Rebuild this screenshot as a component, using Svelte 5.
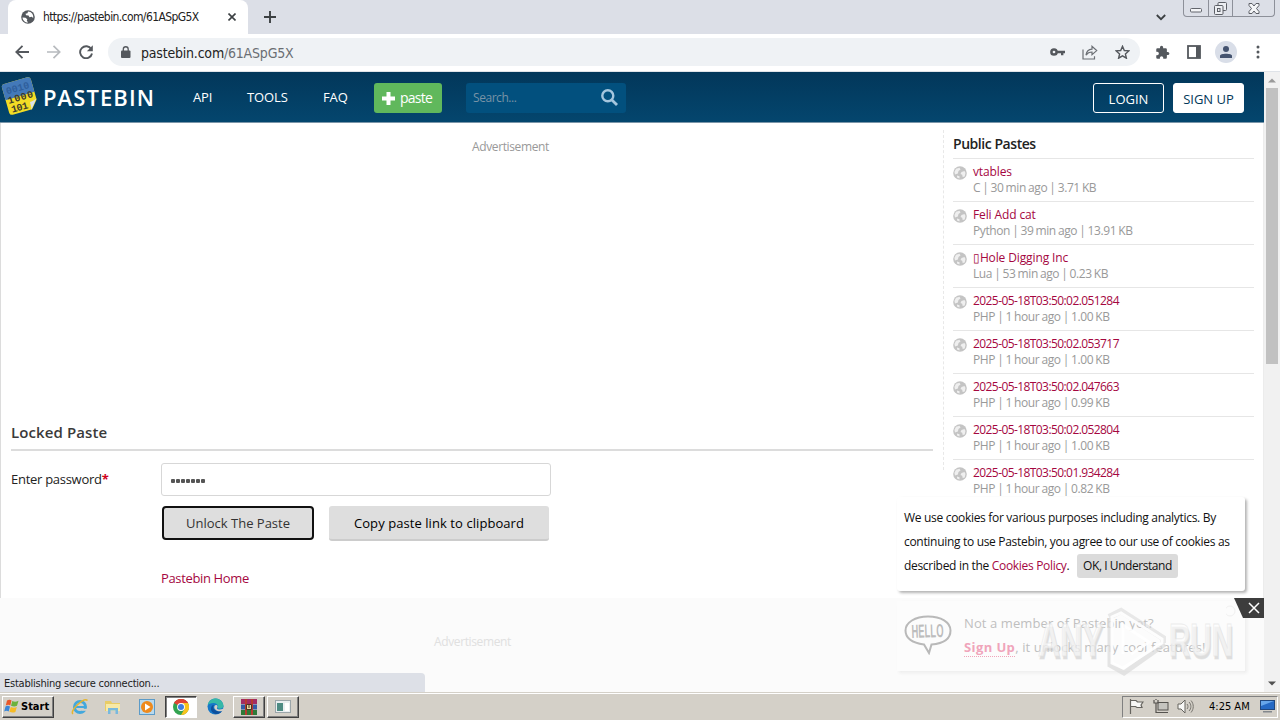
<script lang="ts">
  const pastes = [
    { title: 'vtables', meta: 'C | 30 min ago | 3.71 KB' },
    { title: 'Feli Add cat', meta: 'Python | 39 min ago | 13.91 KB' },
    { title: '▯Hole Digging Inc', meta: 'Lua | 53 min ago | 0.23 KB' },
    { title: '2025-05-18T03:50:02.051284', meta: 'PHP | 1 hour ago | 1.00 KB', stamp: true },
    { title: '2025-05-18T03:50:02.053717', meta: 'PHP | 1 hour ago | 1.00 KB', stamp: true },
    { title: '2025-05-18T03:50:02.047663', meta: 'PHP | 1 hour ago | 0.99 KB', stamp: true },
    { title: '2025-05-18T03:50:02.052804', meta: 'PHP | 1 hour ago | 1.00 KB', stamp: true },
    { title: '2025-05-18T03:50:01.934284', meta: 'PHP | 1 hour ago | 0.82 KB', stamp: true },
  ];

  let password = $state('secret1');
</script>

<div class="screen">
  <div class="tabstrip">
    <div class="tab">
      <svg class="favicon" width="14" height="14" viewBox="0 0 14 14">
        <circle cx="7" cy="7" r="6.800" fill="#54585d" />
        <path d="M1.500 7.500l3 .2 1.800 1.600-.5 1.500 1.400 1.700c-3 .2-5.500-2-5.700-5zM7 1.500l-.5 1.700-2 .6.600 1.500 2.400.2 1 1.700 2.200-.4 1.500 1.200C12.800 4.500 10.500 1.600 7 1.500z" fill="#fff" />
      </svg>
      <span class="tab-title">https://pastebin.com/61ASpG5X</span>
      <svg class="tab-close" width="8" height="8" viewBox="0 0 8 8"><path d="M.5.5l7 7M7.500.5l-7 7" stroke="#3c4043" stroke-width="1.600" /></svg>
    </div>
    <svg class="plus" width="12" height="12" viewBox="0 0 12 12"><path d="M6 0v12M0 6h12" stroke="#3c4043" stroke-width="1.900" /></svg>
    <svg class="chevron" width="10" height="7" viewBox="0 0 10 7"><path d="M.8 1l4.200 4.200L9.200 1" fill="none" stroke="#3c4043" stroke-width="1.800" /></svg>
    <div class="window-buttons">
      <span><svg width="12" height="5" viewBox="0 0 12 5"><rect x=".5" y=".5" width="11" height="3.500" rx="1" fill="#f4f5f7" stroke="#62656c" /></svg></span>
      <span><svg width="13" height="13" viewBox="0 0 13 13" fill="#eceef2" stroke="#5c5f66"><rect x="4" y=".5" width="8.500" height="8" rx="1" /><rect x=".5" y="3.500" width="8.500" height="9" rx="1" /><rect x="3.500" y="6.500" width="2.500" height="3" /></svg></span>
      <span class="wide"><svg width="12" height="11" viewBox="0 0 12 11"><path d="M1 .5h3l2 2.500 2-2.500h3v2L8.500 5.500 11 8.500v2H8L6 8l-2 2.500H1v-2l2.500-3L1 2.500z" fill="#f4f5f7" stroke="#5c5f66" /></svg></span>
    </div>
  </div>

  <div class="toolbar">
    <svg class="back" width="14" height="14" viewBox="0 0 14 14"><path d="M14 7H1.500M7.500.8L1.300 7l6.200 6.200" fill="none" stroke="#54585d" stroke-width="1.800" /></svg>
    <svg class="forward" width="14" height="14" viewBox="0 0 14 14"><path d="M0 7h12.500M6.500.8L12.700 7l-6.200 6.200" fill="none" stroke="#b7babe" stroke-width="1.700" /></svg>
    <svg class="reload" width="14" height="14" viewBox="0 0 14 14"><path d="M12.300 4.200A6 6 0 1 0 13 8.500" fill="none" stroke="#54585d" stroke-width="1.900" /><path d="M13.800.3v5.900H7.900z" fill="#54585d" /></svg>
    <div class="omnibox">
      <svg width="10" height="12" viewBox="0 0 10 12"><rect y="4.500" width="9.500" height="7.500" rx="1" fill="#54585d" /><path d="M2.300 5V3.200a2.450 2.450 0 0 1 4.900 0V5" fill="none" stroke="#54585d" stroke-width="1.300" /></svg>
      <span class="url">pastebin.com<em>/61ASpG5X</em></span>
      <svg class="key" width="15" height="8" viewBox="0 0 15 8"><circle cx="4" cy="4" r="2.600" fill="none" stroke="#54585d" stroke-width="2.500" /><path d="M6.500 4H15M12.200 4v3.200" stroke="#54585d" stroke-width="2.400" /></svg>
      <svg class="share" width="16" height="15" viewBox="0 0 16 15"><path d="M1 4.500V14h11.500v-2.800M4 10.200c.5-3.800 2.500-5.800 6-6V1.300l4.700 4.300L10 9.700V7C7.500 7 5.500 8 4 10.200z" fill="none" stroke="#6b6f74" stroke-width="1.200" /></svg>
      <svg class="star" width="15" height="14" viewBox="0 0 15 14"><path d="M7.500 1.300l1.800 4.200 4.500.4-3.400 3 1 4.300-3.900-2.300-3.900 2.300 1-4.300-3.400-3 4.500-.4z" fill="none" stroke="#54585d" stroke-width="1.400" /></svg>
    </div>
    <svg class="puzzle" width="15" height="15" viewBox="0 0 24 24"><path d="M20.500 11H19V7a2 2 0 0 0-2-2h-4V3.500a2.500 2.500 0 0 0-5 0V5H4a2 2 0 0 0-2 2v3.800h1.500a2.700 2.700 0 0 1 0 5.400H2V20a2 2 0 0 0 2 2h3.800v-1.500a2.700 2.700 0 0 1 5.400 0V22H17a2 2 0 0 0 2-2v-4h1.500a2.500 2.500 0 0 0 0-5z" fill="#54585d" /></svg>
    <svg class="panel" width="14" height="14" viewBox="0 0 14 14"><rect x="1" y="1" width="12" height="12" fill="#fff" stroke="#54585d" stroke-width="1.800" /><path d="M9 1h4v12H9z" fill="#54585d" /></svg>
    <span class="avatar"><svg width="12" height="12" viewBox="0 0 12 12" fill="#44536f"><circle cx="6" cy="3" r="3" /><path d="M0 12V9.800C0 7 12 7 12 9.800V12z" /></svg></span>
    <svg class="dots" width="4" height="14" viewBox="0 0 4 14" fill="#54585d"><circle cx="2" cy="2" r="1.500" /><circle cx="2" cy="7" r="1.500" /><circle cx="2" cy="12" r="1.500" /></svg>
  </div>

  <div class="viewport">
    <div class="page">
      <header>
        <svg class="logo" width="38" height="42" viewBox="0 0 38 42">
          <g transform="rotate(-16 19 21)">
            <path d="M7 5h24a3 3 0 0 1 3 3v21l-7 8H7a3 3 0 0 1-3-3V8a3 3 0 0 1 3-3z" fill="#f3dc25" />
            <path d="M7 5h24a3 3 0 0 1 3 3v13H4V8a3 3 0 0 1 3-3z" fill="#4379b9" />
            <text x="7" y="16" textLength="24" fill="#2f5f9c">0010</text>
            <text x="6" y="25.500" textLength="26" fill="#3d3b2c">1000</text>
            <text x="7" y="35" textLength="17" fill="#3d3b2c">101</text>
            <path d="M34 28l-8 9.500c1.500-3 .5-6 1-8 2 .2 4.500-.2 7-1.500z" fill="#dce3ea" />
          </g>
        </svg>
        <span class="brand">PASTEBIN</span>
        <nav>
          <a class="api" href="#api">API</a>
          <a class="tools" href="#tools">TOOLS</a>
          <a class="faq" href="#faq">FAQ</a>
        </nav>
        <button class="new-paste">
          <svg width="13" height="13" viewBox="0 0 13 13"><path d="M6.500 0v13M0 6.500h13" stroke="#fff" stroke-width="4" /></svg>
          <span>paste</span>
        </button>
        <div class="search">
          <span>Search...</span>
          <svg width="17" height="17" viewBox="0 0 17 17"><circle cx="6.800" cy="6.800" r="5.500" fill="none" stroke="#a5c6de" stroke-width="2.400" /><path d="M10.700 10.700l5.300 5.300" stroke="#a5c6de" stroke-width="2.800" /></svg>
        </div>
        <div class="auth">
          <button class="login">LOGIN</button>
          <button class="signup">SIGN UP</button>
        </div>
      </header>

      <div class="content">
        <main>
          <div class="ad"><span>Advertisement</span></div>
          <h1><span>Locked Paste</span></h1>
          <div class="field">
            <label for="password">Enter password<b>*</b></label>
            <div class="input" id="password">
              {#each password as _, i (i)}
                <i></i>
              {/each}
            </div>
          </div>
          <div class="actions">
            <button class="unlock">Unlock The Paste</button>
            <button class="copy">Copy paste link to clipboard</button>
          </div>
          <a class="home" href="#home">Pastebin Home</a>
        </main>

        <aside>
          <h2>Public Pastes</h2>
          <ul>
            {#each pastes as paste (paste.title)}
              <li>
                <svg width="14" height="14" viewBox="0 0 14 14">
                  <circle cx="7" cy="7" r="6.800" fill="#c4c4c4" />
                  <path d="M3 2.800l3.500-1 1 1.600-2 1.700-.6 2.500L2 8.500 1.400 6zM8.500 6l3-1 1 2-.8 3.500-2 .5-.5-2.200-1.700-.8zM4 9.500l2.500.8v2.200L4 11.500z" fill="#efefef" />
                </svg>
                <div>
                  <a class:stamp={paste.stamp} href="#paste">{paste.title}</a>
                  <p>{paste.meta}</p>
                </div>
              </li>
            {/each}
          </ul>
        </aside>
      </div>

      <div class="banner">
        <span>Advertisement</span>
      </div>

      <div class="hello">
        <svg width="48" height="40" viewBox="0 0 48 40">
          <path d="M24 1.500C11 1.500 1.500 7.500 1.500 15.500S9 28 20 29.500L25 38l2.500-8.500C39 28.500 46.500 24 46.500 15.500S37 1.500 24 1.500z" fill="#fcfcfc" stroke="#b9b9b9" stroke-width="2" />
          <text x="7.500" y="22.500" textLength="32" lengthAdjust="spacingAndGlyphs" transform="rotate(-2 24 16)">HELLO</text>
        </svg>
        <p><span class="ask">Not a member of Pastebin yet?</span><br /><a href="#signup">Sign Up</a><span class="cool">, it unlocks many cool features!</span></p>
      </div>

      <svg class="dismiss" width="38" height="20" viewBox="0 0 38 20">
        <circle cx="4" cy="13" r="5" fill="none" stroke="#f0f0f0" />
        <path d="M8 0h30v20H17z" fill="#3d3d3d" />
        <path d="M23 5l10 10M33 5L23 15" stroke="#fff" stroke-width="1.500" />
      </svg>

      <div class="cookies">
        <p>We use cookies for various purposes including analytics. By</p>
        <p>continuing to use Pastebin, you agree to our use of cookies as</p>
        <p class="last"><span>described in the <a href="#policy">Cookies Policy</a>.</span> <button>OK, I Understand</button></p>
      </div>

      <svg class="watermark" width="200" height="70" viewBox="0 0 200 70">
        <g class="shade" transform="translate(1 2)">
          <text x="3" y="50" textLength="65" lengthAdjust="spacingAndGlyphs">ANY</text>
          <text x="134" y="50" textLength="64" lengthAdjust="spacingAndGlyphs">RUN</text>
        </g>
        <text x="3" y="49" textLength="65" lengthAdjust="spacingAndGlyphs">ANY</text>
        <text x="134" y="49" textLength="64" lengthAdjust="spacingAndGlyphs">RUN</text>
        <path d="M75 11v47l14 8 41-29" fill="none" stroke="#dadada" stroke-width="5" opacity=".7" />
        <path d="M74 10l12-6 42 27v5" fill="none" stroke="#dadada" stroke-width="6" opacity=".6" />
        <path d="M77 56V10l9-4 41 26v4L88 61zM88 47V18l26 17-18 12" fill="none" stroke="#fff" stroke-width="3" opacity=".9" />
      </svg>

      <div class="status">Establishing secure connection...</div>
    </div>

    <div class="scrollbar">
      <svg width="8" height="5" viewBox="0 0 8 5"><path d="M0 4.500h8L4 .5z" fill="#9a9a9a" /></svg>
      <i></i>
      <svg class="down" width="8" height="5" viewBox="0 0 8 5"><path d="M0 .5h8l-4 4z" fill="#505050" /></svg>
    </div>
  </div>

  <footer>
    <div class="start">
      <svg width="16" height="15" viewBox="0 0 16 15"><path d="M3 1.500c2-1.200 3.500-.8 4.500 0L6.300 6.500c-1.500-1-3-.8-4.500 0z" fill="#e8582a" /><path d="M8.300 2c2 1 4 .8 6.200-.2L13 6.800c-2 1-4 .8-6 0z" fill="#6cb23c" /><path d="M1.500 7.500c1.500-1 3-.9 4.500 0l-1.300 5c-1.500-.9-3-.9-4.500 0z" fill="#3a86d8" /><path d="M6.800 8c2 .9 4 1 6 0l-1.400 5c-2 .9-4 .8-6-.2z" fill="#f6bb25" /></svg>
      <b>Start</b>
    </div>
    <div class="slot ie">
      <svg width="18" height="18" viewBox="0 0 18 18"><circle cx="9" cy="9" r="5.500" fill="none" stroke="#43a8dd" stroke-width="3" /><path d="M5 9h9" stroke="#43a8dd" stroke-width="2" /><path d="M11 10.800h5v2h-5z" fill="#d4d0c8" /><path d="M2 16C-2 13 13-1 16.500 2.500" fill="none" stroke="#e6b52f" stroke-width="1.500" /></svg>
    </div>
    <div class="slot folder">
      <svg width="18" height="16" viewBox="0 0 18 16"><path d="M1 2h6l1 2h8v8H1z" fill="#e8cc66" /><path d="M2 5h14v7H2z" fill="#f7e9a6" /><path d="M4 15V9h10v6h-2.500v-3.500h-5V15z" fill="#79b9dd" /></svg>
    </div>
    <div class="slot media">
      <svg width="16" height="16" viewBox="0 0 16 16"><rect x=".5" y=".5" width="15" height="15" fill="#b9d9ed" stroke="#5c9bc8" /><circle cx="8" cy="8" r="6" fill="#ee8a1d" /><path d="M6 4.500L11.500 8 6 11.500z" fill="#fff" /></svg>
    </div>
    <div class="slot task pressed">
      <svg width="16" height="16" viewBox="0 0 16 16"><circle cx="8" cy="8" r="8" fill="#32a350" /><path d="M8 8L1.100 4A8 8 0 0 1 15 4z" fill="#df4335" /><path d="M8 8l7-4A8 8 0 0 1 8 16l3.500-6z" fill="#f9c31c" /><path d="M8 4h7l-2 5z" fill="#f9c31c" /><path d="M1.100 4A8 8 0 0 1 15 4H8z" fill="#df4335" /><circle cx="8" cy="8" r="3.900" fill="#fff" /><circle cx="8" cy="8" r="3" fill="#3e7de0" /></svg>
    </div>
    <div class="slot edge">
      <svg width="17" height="17" viewBox="0 0 17 17"><circle cx="8.500" cy="8.500" r="8" fill="#1577c8" /><path d="M.8 7C2-1.500 15-2 16.500 7.500c.3 3-4 4-6 2.500 1.500-3-1-5-4-5C3.500 5 1.800 6 .8 7z" fill="#35b8a7" /><path d="M7 7c-2.500 3 1 7.500 8 6-3 4-9 4-11-1C3.500 9 5 7 7 7z" fill="#0d4f9c" /><path d="M7.500 8c1-1.500 3-1 3 .5 0 1-.8 1.300-.5 2 .6 1.300 4 1.300 6 .3v2C12 14.500 6 12 7.500 8z" fill="#d4d0c8" /></svg>
    </div>
    <div class="slot task winrar">
      <svg width="16" height="16" viewBox="0 0 16 16"><path d="M0 0h16v5H0z" fill="#a32c63" /><path d="M0 5.500h16v5H0z" fill="#345aa6" /><path d="M0 11h16v5H0z" fill="#2e7a38" /><path d="M4 0h2v16H4zM10 0h2v16h-2z" fill="#b83a30" /><path d="M5.500 5.500h5v5h-5z" fill="#e8d8a0" stroke="#4a3321" /><path d="M8 5v4" stroke="#4a3321" /></svg>
    </div>
    <div class="slot task">
      <svg width="16" height="13" viewBox="0 0 16 13"><rect x=".5" y=".5" width="15" height="12" fill="#e9eef0" stroke="#9ba5a9" /><path d="M2 3h6v8H2z" fill="#4d8b83" /><path d="M10 3h4v8h-4z" fill="#fff" /></svg>
    </div>
    <div class="tray">
      <svg class="flag" width="15" height="15" viewBox="0 0 15 15"><path d="M1.500 0v15M2 1.500h5l1.500 1.500H14L12 6l1 2.500H8L6.500 7.500H2" fill="#f8f8f6" stroke="#66645f" stroke-width="1.200" /></svg>
      <svg class="net" width="16" height="15" viewBox="0 0 16 15"><rect x="5" y="3.500" width="10" height="7.500" fill="#c5c4bf" stroke="#55534f" /><path d="M7 13.500h8M1 1v3h4V1M3 4v9.500h4M3 0v1" fill="none" stroke="#55534f" stroke-width="1.200" /></svg>
      <svg class="sound" width="17" height="15" viewBox="0 0 17 15"><path d="M1 5h3l4-4v13l-4-4H1z" fill="#f8f8f6" stroke="#66645f" /><path d="M10 5c1.300 1.500 1.300 3.500 0 5M12 3c2.500 2.500 2.500 6.500 0 9M14 1.500c3 3.500 3 8.500 0 12" fill="none" stroke="#77756f" /></svg>
      <time>4:25 AM</time>
      <svg class="monitor" width="15" height="13" viewBox="0 0 15 13"><rect x=".5" y=".5" width="14" height="9" fill="#2569c4" stroke="#20477e" /><path d="M1 1h13L1 6z" fill="#67a6ea" /><path d="M3 11h9v1.500H3z" fill="#82878c" /></svg>
    </div>
  </footer>
</div>

<style>
  :global(body) {
    background: #fff;
    overflow: hidden;
  }

  .screen {
    width: 1280px;
    height: 720px;
    display: flex;
    flex-direction: column;
    overflow: hidden;
    font-family: 'Open Sans', 'Noto Sans', sans-serif;
    font-size: 12px;
    color: #222;
    white-space: nowrap;
  }

  svg {
    display: block;
    flex: none;
  }

  p, h1, h2, ul {
    margin: 0;
    padding: 0;
  }

  a {
    color: #a5073f;
    text-decoration: none;
  }

  button {
    font: inherit;
    padding: 0;
    border: 0;
    white-space: nowrap;
  }

  .tabstrip, .toolbar, footer, .status {
    font-family: 'DejaVu Sans Condensed', 'DejaVu Sans', sans-serif;
    font-stretch: condensed;
  }

  .tabstrip {
    height: 34px;
    flex: none;
    display: flex;
    align-items: flex-start;
    background: #dcdfe7;
  }

  .tab {
    width: 240px;
    height: 34px;
    margin-left: 8px;
    border-radius: 8px 8px 0 0;
    background: #fff;
    display: flex;
    align-items: center;
    box-sizing: border-box;
    padding-left: 13px;
  }

  .tab-title {
    width: 156px;
    margin: 0 29px 0 8px;
    font-size: 12px;
    letter-spacing: -0.6px;
  }

  .plus {
    margin: 11px 0 0 16px;
  }

  .chevron {
    margin: 14px 17px 0 auto;
  }

  .window-buttons {
    width: 92px;
    height: 17px;
    margin-right: 5px;
    border: 1px solid #8d9099;
    border-top: 0;
    border-radius: 0 0 4px 4px;
    box-sizing: border-box;
    display: flex;
  }

  .window-buttons span {
    width: 25px;
    display: flex;
    align-items: center;
    justify-content: center;
    border-right: 1px solid #8d9099;
    box-sizing: border-box;
  }

  .window-buttons span:first-child {
    padding-top: 4px;
  }

  .window-buttons .wide {
    width: 41px;
    border-right: 0;
  }

  .toolbar {
    height: 38px;
    flex: none;
    display: flex;
    align-items: center;
    box-sizing: border-box;
    padding: 0 0 1px 15px;
    border-bottom: 1px solid #dfe3e8;
    background: #fff;
  }

  .forward {
    margin-left: 18px;
  }

  .reload {
    margin-left: 18px;
  }

  .omnibox {
    width: 1032px;
    height: 28px;
    margin-left: 15px;
    border-radius: 14px;
    background: #eff2f5;
    display: flex;
    align-items: center;
    box-sizing: border-box;
    padding-left: 13px;
  }

  .url {
    margin: 1px 0 0 10px;
    font-size: 14px;
    letter-spacing: -0.2px;
  }

  .url em {
    font-style: normal;
    color: #6a6e73;
  }

  .key {
    margin-left: auto;
  }

  .share {
    margin-left: 17px;
  }

  .star {
    margin: 0 10px 0 17px;
  }

  .puzzle {
    margin-left: 15px;
  }

  .panel {
    margin-left: 17px;
  }

  .avatar {
    width: 22px;
    height: 22px;
    margin-left: 14px;
    border-radius: 50%;
    background: #d9dee8;
    display: flex;
    align-items: center;
    justify-content: center;
  }

  .dots {
    margin-left: 19px;
  }

  .viewport {
    height: 620px;
    flex: none;
    display: flex;
  }

  .page {
    width: 1264px;
    display: flex;
    flex-direction: column;
    position: relative;
    overflow: hidden;
  }

  header {
    height: 51px;
    flex: none;
    display: flex;
    align-items: center;
    box-sizing: border-box;
    border-bottom: 1px solid #7b96a9;
    background: linear-gradient(#02375a, #04466e);
    color: #fff;
  }

  header a {
    color: #fff;
  }

  .logo {
    margin: 0 0 2px 1px;
  }

  .logo text {
    font: bold 10px 'Liberation Mono', monospace;
  }

  .brand {
    width: 114px;
    margin-left: 4px;
    font-size: 22px;
    font-weight: 600;
    letter-spacing: 1.1px;
  }

  nav {
    display: flex;
    width: 217px;
    padding-left: 36px;
    box-sizing: border-box;
    font-size: 13px;
    letter-spacing: -0.1px;
  }

  .api {
    width: 54px;
  }

  .tools {
    width: 76px;
  }

  .new-paste {
    width: 68px;
    height: 30px;
    margin-top: 2px;
    display: flex;
    align-items: center;
    gap: 5px;
    padding-left: 8px;
    border-radius: 3px;
    background: #60b85c;
    color: #fff;
    font-size: 14px;
    letter-spacing: -0.75px;
  }

  .new-paste span {
    margin-top: -2px;
  }

  .search {
    width: 160px;
    height: 30px;
    margin: 2px 0 0 24px;
    display: flex;
    align-items: center;
    justify-content: space-between;
    padding: 0 8px 2px 7px;
    box-sizing: border-box;
    border-radius: 3px;
    background: #02507e;
    color: #7893a6;
    letter-spacing: -0.45px;
  }

  .auth {
    display: flex;
    gap: 9px;
    margin-top: 1px;
    margin-left: auto;
    margin-right: 20px;
    font-size: 13px;
    letter-spacing: -0.3px;
  }

  .auth button {
    width: 71px;
    height: 30px;
    padding-top: 2px;
    border: 1px solid #fff;
    border-radius: 3px;
    background: transparent;
    color: #fff;
  }

  .auth .signup {
    background: #fff;
    color: #023859;
  }

  .content {
    height: 569px;
    display: flex;
    border-left: 1px solid #dcdcdc;
    border-right: 1px solid #ececec;
    box-sizing: border-box;
  }

  main {
    width: 922px;
    padding: 0 10px;
    flex: none;
    display: flex;
    flex-direction: column;
    font-size: 13px;
  }

  .ad {
    height: 287px;
    padding: 15px 0 0 461px;
    box-sizing: border-box;
    font-size: 12px;
    line-height: 18px;
    letter-spacing: -0.38px;
    color: #999;
  }

  h1 {
    height: 41px;
    box-sizing: border-box;
    padding-top: 10px;
    border-bottom: 2px solid #dcdcdc;
    font-size: 15px;
    line-height: 24px;
    font-weight: 600;
    letter-spacing: 0.1px;
    color: #3a3a3a;
  }

  .field {
    display: flex;
    align-items: center;
    margin-top: 12px;
    height: 33px;
  }

  .field label {
    width: 150px;
    padding-bottom: 2px;
    letter-spacing: -0.28px;
  }

  .field b {
    color: #d0021b;
  }

  .input {
    width: 390px;
    height: 33px;
    box-sizing: border-box;
    border: 1px solid #d7d7d7;
    border-radius: 3px;
    padding: 2px 0 0 9px;
    display: flex;
    align-items: center;
    gap: 1px;
  }

  .input i {
    width: 4px;
    height: 4px;
    border-radius: 1px;
    background: #555;
  }

  .actions {
    display: flex;
    gap: 15px;
    margin: 10px 0 0 151px;
  }

  .actions button {
    height: 35px;
    border-radius: 3px;
    background: #dedede;
    font-size: 13px;
  }

  .actions .unlock {
    width: 152px;
    height: 34px;
    border: 2px solid #111;
    border-radius: 4px;
    color: #333;
  }

  .actions .copy {
    width: 220px;
    border-bottom: 2px solid #ccc;
    color: #000;
    letter-spacing: 0.07px;
  }

  .home {
    margin: 27px 0 0 150px;
    line-height: 20px;
    letter-spacing: -0.35px;
  }

  aside {
    width: 301px;
    height: 340px;
    margin-top: 7px;
    padding: 0 9px;
    border-left: 1px dashed #e8e8e8;
  }

  h2 {
    height: 28px;
    box-sizing: border-box;
    padding-top: 4px;
    font-size: 14px;
    line-height: 20px;
    font-weight: 600;
    letter-spacing: -0.45px;
  }

  ul {
    list-style: none;
  }

  li {
    height: 43px;
    box-sizing: border-box;
    border-top: 1px solid #e6e6e6;
    padding-top: 5px;
    display: flex;
    gap: 6px;
    line-height: 16px;
  }

  li svg {
    margin-top: 2px;
  }

  li a {
    display: block;
    letter-spacing: -0.12px;
  }

  li .stamp {
    letter-spacing: -0.58px;
  }

  li p {
    color: #999;
    letter-spacing: -0.4px;
    word-spacing: -0.6px;
  }

  .banner {
    position: absolute;
    left: 0;
    top: 526px;
    width: 1264px;
    height: 94px;
    background: #fbfbfb;
  }

  .banner span {
    display: block;
    margin: 35px 0 0 434px;
    color: #e0e0e0;
    line-height: 18px;
    letter-spacing: -0.38px;
  }

  .hello {
    position: absolute;
    left: 897px;
    top: 529px;
    width: 348px;
    height: 70px;
    box-sizing: border-box;
    padding: 10px 7px;
    display: flex;
    gap: 12px;
    background: #fcfcfc;
    box-shadow: 2px 2px 3px #ededed;
    font-size: 13px;
    line-height: 24px;
    letter-spacing: 0.1px;
    color: #bfbfbf;
  }

  .hello svg {
    margin-top: 4px;
  }

  .hello text {
    font: bold 19px 'Liberation Sans', sans-serif;
    fill: #bdbdbd;
  }

  .hello a {
    color: #f0a5bb;
    font-weight: bold;
    border-bottom: 1px dotted #f0a5bb;
    letter-spacing: 0.4px;
  }

  .dismiss {
    position: absolute;
    left: 1226px;
    top: 526px;
  }

  .cookies {
    position: absolute;
    left: 897px;
    top: 425px;
    width: 348px;
    height: 94px;
    box-sizing: border-box;
    padding: 9px 7px;
    border-radius: 3px;
    background: #fff;
    box-shadow: 2px 2px 3px rgba(0, 0, 0, 0.3);
    line-height: 24px;
    letter-spacing: -0.31px;
    color: #111;
  }

  .cookies p {
    height: 24px;
  }

  .last {
    display: flex;
  }

  .last span {
    width: 173px;
  }

  .cookies button {
    width: 101px;
    height: 24px;
    border-radius: 3px;
    background: #dbdbdb;
    color: #111;
    letter-spacing: -0.44px;
  }

  .watermark {
    position: absolute;
    left: 1035px;
    top: 535px;
  }

  .watermark text {
    font: bold 46px 'Liberation Sans', sans-serif;
    fill: rgba(255, 255, 255, 0.6);
    stroke: rgba(225, 225, 225, 0.6);
    stroke-width: 1px;
  }

  .shade text {
    fill: rgba(190, 190, 190, 0.5);
  }

  .status {
    position: absolute;
    left: 0;
    top: 601px;
    width: 425px;
    height: 19px;
    box-sizing: border-box;
    padding-left: 4px;
    border-radius: 0 4px 0 0;
    background: #dde0e7;
    font-size: 11px;
    line-height: 21px;
    letter-spacing: -0.23px;
  }

  .scrollbar {
    width: 16px;
    display: flex;
    flex-direction: column;
    align-items: center;
    background: #f1f1f1;
  }

  .scrollbar svg {
    margin-top: 6px;
  }

  .scrollbar i {
    width: 12px;
    height: 276px;
    margin-top: 5px;
    background: #c1c1c1;
  }

  .scrollbar .down {
    margin: auto 0 6px;
  }

  footer {
    height: 28px;
    flex: none;
    display: flex;
    align-items: center;
    box-sizing: border-box;
    padding: 0 2px;
    border-top: 1px solid #d4d0c8;
    box-shadow: inset 0 1px #fff;
    background: #d4d0c8;
    color: #000;
    font-size: 11px;
  }

  .start, .task {
    height: 22px;
    box-sizing: border-box;
    border: 1px solid;
    border-color: #fff #404040 #404040 #fff;
    box-shadow: inset -1px -1px #808080;
  }

  .start {
    width: 52px;
    display: flex;
    align-items: center;
    gap: 1px;
    padding-left: 1px;
  }

  .slot {
    width: 32px;
    display: flex;
    align-items: center;
    justify-content: center;
  }

  .ie {
    margin-left: 10px;
  }

  .folder {
    margin-left: 1px;
  }

  .media {
    margin-left: 2px;
  }

  .pressed {
    margin-left: 2px;
    border-color: #404040 #fff #fff #404040;
    box-shadow: inset 1px 1px #808080;
    background: #fff;
  }

  .edge {
    margin: 0 2px;
  }

  .winrar {
    margin-right: 2px;
  }

  .tray {
    width: 156px;
    height: 22px;
    margin-left: auto;
    display: flex;
    align-items: center;
    box-sizing: border-box;
    padding-left: 6px;
    border: 1px solid;
    border-color: #808080 #fff #fff #808080;
  }

  .net {
    margin-left: 9px;
  }

  .sound {
    margin-left: 8px;
  }

  time {
    width: 51px;
    margin-left: 15px;
  }
</style>
